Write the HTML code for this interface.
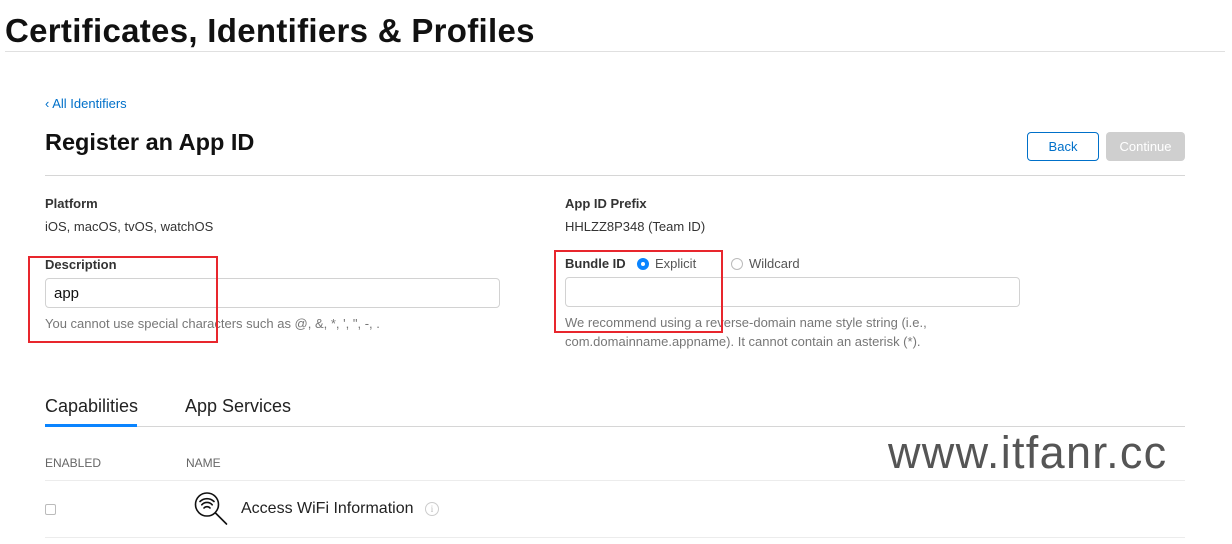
<!DOCTYPE html>
<html><head><style>
body{margin:0;width:1232px;height:544px;background:#fff;position:relative;overflow:hidden;font-family:"Liberation Sans",sans-serif;color:#333}
.a{position:absolute;white-space:nowrap}
.lbl{font-size:13px;font-weight:bold;color:#333}
.val{font-size:13px;color:#333}
.help{font-size:13px;color:#777}
.in{position:absolute;border:1px solid #d2d2d2;border-radius:4px;box-sizing:border-box;background:#fff}
.red{position:absolute;border:2px solid #e8262d;box-sizing:border-box}
.line{position:absolute;height:1px;background:#e0e0e0}
</style></head><body>
<div class="a" style="left:5px;top:12px;font-size:33px;font-weight:bold;color:#111;letter-spacing:0.3px">Certificates, Identifiers &amp; Profiles</div>
<div class="line" style="left:5px;top:51px;width:1220px"></div>
<div class="a" style="left:45px;top:96px;font-size:13px;color:#0070c9">‹ All Identifiers</div>
<div class="a" style="left:45px;top:129px;font-size:23.5px;font-weight:bold;color:#111">Register an App ID</div>
<div class="a" style="left:1027px;top:132px;width:72px;height:29px;border:1px solid #0070c9;border-radius:4px;box-sizing:border-box;color:#0070c9;font-size:13px;text-align:center;line-height:27px">Back</div>
<div class="a" style="left:1106px;top:132px;width:79px;height:29px;background:#cfcfcf;border-radius:4px;color:#fff;font-size:13px;text-align:center;line-height:29px">Continue</div>
<div class="line" style="left:45px;top:175px;width:1140px;background:#d6d6d6"></div>

<div class="a lbl" style="left:45px;top:196px">Platform</div>
<div class="a val" style="left:45px;top:219px">iOS, macOS, tvOS, watchOS</div>
<div class="a lbl" style="left:565px;top:196px">App ID Prefix</div>
<div class="a val" style="left:565px;top:219px">HHLZZ8P348 (Team ID)</div>

<div class="a lbl" style="left:45px;top:257px">Description</div>
<div class="in" style="left:45px;top:278px;width:455px;height:30px"></div>
<div class="a" style="left:54px;top:285px;font-size:15px;color:#111">app</div>
<div class="a help" style="left:45px;top:316px">You cannot use special characters such as @, &amp;, *, ', ", -, .</div>
<div class="red" style="left:28px;top:256px;width:190px;height:87px"></div>

<div class="a lbl" style="left:565px;top:256px">Bundle ID</div>
<div class="a" style="left:637px;top:258px;width:12px;height:12px;border-radius:50%;background:#0a84ff;box-sizing:border-box;border:4px solid #0a84ff"><div style="width:4px;height:4px;background:#fff;border-radius:50%"></div></div>
<div class="a val" style="left:655px;top:256px;color:#555">Explicit</div>
<div class="a" style="left:731px;top:258px;width:12px;height:12px;border-radius:50%;border:1px solid #bbb;box-sizing:border-box"></div>
<div class="a val" style="left:749px;top:256px;color:#555">Wildcard</div>
<div class="in" style="left:565px;top:277px;width:455px;height:30px"></div>
<div class="a help" style="left:565px;top:315px">We recommend using a reverse-domain name style string (i.e.,</div>
<div class="a help" style="left:565px;top:334px">com.domainname.appname). It cannot contain an asterisk (*).</div>
<div class="red" style="left:554px;top:250px;width:169px;height:83px"></div>

<div class="a" style="left:45px;top:396px;font-size:18px;color:#222">Capabilities</div>
<div class="a" style="left:185px;top:396px;font-size:18px;color:#222">App Services</div>
<div class="line" style="left:45px;top:426px;width:1140px;background:#d6d6d6"></div>
<div class="a" style="left:45px;top:424px;width:92px;height:3px;background:#0a84ff"></div>

<div class="a" style="left:45px;top:456px;font-size:12px;color:#666">ENABLED</div>
<div class="a" style="left:186px;top:456px;font-size:12px;color:#666">NAME</div>
<div class="line" style="left:45px;top:480px;width:1140px;background:#ececec"></div>
<div class="a" style="left:45px;top:504px;width:11px;height:11px;border:1px solid #bbb;border-radius:2px;box-sizing:border-box"></div>
<svg class="a" style="left:192px;top:492px" width="38" height="34" viewBox="0 0 38 34" fill="none" stroke="#111" stroke-width="1.6" stroke-linecap="round">
<circle cx="15" cy="12.5" r="11.5"/>
<path d="M8 9.5a10 10 0 0 1 14 0M9.8 12.8a7 7 0 0 1 10.4 0M12 16a4 4 0 0 1 6 0"/>
<path d="M23.5 21l11 11"/>
</svg>
<div class="a" style="left:241px;top:500px;font-size:16px;color:#222">Access WiFi Information</div>
<div class="a" style="left:425px;top:502px;width:14px;height:14px;border:1px solid #ccc;border-radius:50%;box-sizing:border-box;font-size:9px;color:#bbb;text-align:center;line-height:13px;font-family:'Liberation Serif',serif">i</div>
<div class="line" style="left:45px;top:537px;width:1140px;background:#ececec"></div>

<div class="a" style="left:888px;top:427px;font-size:45px;color:#555;letter-spacing:1.3px">www.itfanr.cc</div>
</body></html>
